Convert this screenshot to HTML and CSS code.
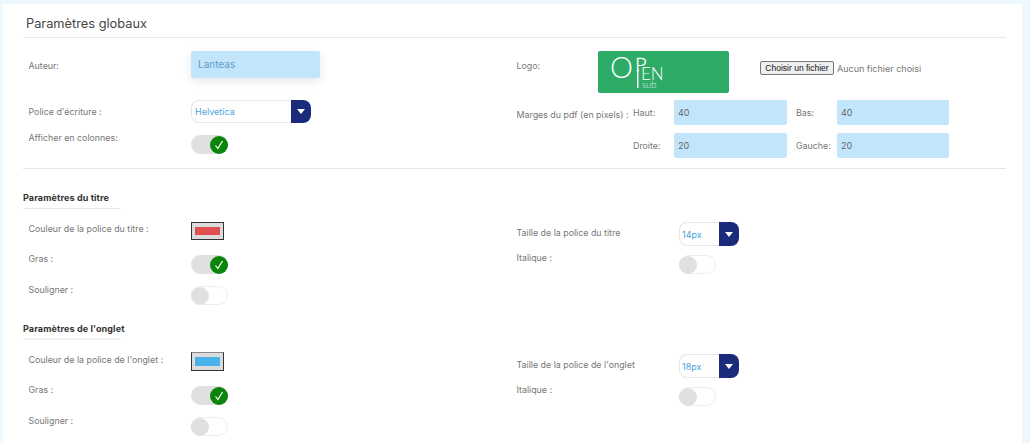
FILE: index.html
```html
<!DOCTYPE html>
<html lang="fr">
<head>
<meta charset="utf-8">
<title>Paramètres</title>
<link rel="stylesheet" href="styles.css">
</head>
<body>
<main class="card">
  <h1 class="title">Paramètres globaux</h1>

  <section class="grid global">
    <div class="col">
      <div class="row row-author">
        <span class="label">Auteur:</span>
        <div class="author">Lanteas</div>
      </div>
      <div class="row row-font">
        <span class="label">Police d'écriture :</span>
        <div class="select wide"><span class="value">Helvetica</span><span class="caret"><i></i></span></div>
      </div>
      <div class="row row-toggle">
        <span class="label">Afficher en colonnes:</span>
        <div class="toggle on"><span class="knob"><svg viewBox="0 0 18 18" width="18" height="18"><path d="M5.5 9.5l2.4 3L12.5 5" fill="none" stroke="#fff" stroke-width="1.2"/></svg></span></div>
      </div>
    </div>
    <div class="col">
      <div class="logo-row">
        <span class="label logo-label">Logo:</span>
        <div class="logo">
          <svg viewBox="0 0 131 42" width="131" height="42">
            <text x="12" y="27" class="l-o">O</text>
            <text x="37" y="21" class="l-p">P</text>
            <rect x="39" y="18" width="1.5" height="19" fill="#fff"/>
            <text x="43" y="29" class="l-en">EN</text>
            <text x="44" y="37" class="l-sub">sub</text>
          </svg>
        </div>
        <div class="file">
          <button class="file-btn" type="button">Choisir un fichier</button>
          <span class="file-name">Aucun fichier choisi</span>
        </div>
      </div>
      <div class="margins">
        <span class="label margins-label">Marges du pdf (en pixels) :</span>
        <div class="margins-grid">
          <span class="label">Haut:</span><div class="box">40</div>
          <span class="label second">Bas:</span><div class="box">40</div>
          <span class="label">Droite:</span><div class="box">20</div>
          <span class="label second">Gauche:</span><div class="box">20</div>
        </div>
      </div>
    </div>
  </section>

  <section class="block block-title">
    <h2 class="subtitle">Paramètres du titre</h2>
    <div class="grid">
      <div class="col">
        <div class="row row-color">
          <span class="label">Couleur de la police du titre :</span>
          <div class="swatch"><span class="fill red"></span></div>
        </div>
        <div class="row row-bold">
          <span class="label">Gras :</span>
          <div class="toggle on"><span class="knob"><svg viewBox="0 0 18 18" width="18" height="18"><path d="M5.5 9.5l2.4 3L12.5 5" fill="none" stroke="#fff" stroke-width="1.2"/></svg></span></div>
        </div>
        <div class="row row-under">
          <span class="label">Souligner :</span>
          <div class="toggle"><span class="knob"></span></div>
        </div>
      </div>
      <div class="col">
        <div class="row row-size">
          <span class="label">Taille de la police du titre</span>
          <div class="select small"><span class="value">14px</span><span class="caret"><i></i></span></div>
        </div>
        <div class="row row-italic">
          <span class="label">Italique :</span>
          <div class="toggle"><span class="knob"></span></div>
        </div>
      </div>
    </div>
  </section>

  <section class="block block-tab">
    <h2 class="subtitle thick">Paramètres de l'onglet</h2>
    <div class="grid">
      <div class="col">
        <div class="row row-color">
          <span class="label">Couleur de la police de l'onglet :</span>
          <div class="swatch"><span class="fill blue"></span></div>
        </div>
        <div class="row row-bold">
          <span class="label">Gras :</span>
          <div class="toggle on"><span class="knob"><svg viewBox="0 0 18 18" width="18" height="18"><path d="M5.5 9.5l2.4 3L12.5 5" fill="none" stroke="#fff" stroke-width="1.2"/></svg></span></div>
        </div>
        <div class="row row-under">
          <span class="label">Souligner :</span>
          <div class="toggle"><span class="knob"></span></div>
        </div>
      </div>
      <div class="col">
        <div class="row row-size">
          <span class="label">Taille de la police de l'onglet</span>
          <div class="select small"><span class="value">18px</span><span class="caret"><i></i></span></div>
        </div>
        <div class="row row-italic">
          <span class="label">Italique :</span>
          <div class="toggle"><span class="knob"></span></div>
        </div>
      </div>
    </div>
  </section>
</main>
</body>
</html>
```
FILE: styles.css
```css
* { box-sizing: border-box; }
html, body { height: 100%; }
body {
  margin: 0;
  background: #eef9ff;
  overflow: hidden;
  font-family: Inter, "Liberation Sans", sans-serif;
  color: #6f6f6f;
}
.card {
  margin: 4px 8px 0 3px;
  padding: 12px 16px 0 20px;
  height: 439px;
  background: #fff;
}
.title {
  margin: 0;
  height: 22px;
  padding-left: 3px;
  font-size: 12.8px;
  line-height: 15px;
  font-weight: 400;
  color: #444;
  border-bottom: 1px solid #e8e8e8;
}
.grid {
  display: grid;
  grid-template-columns: 488px 1fr;
  padding-left: 5.5px;
}
.global {
  height: 131px;
  padding-top: 13px;
  border-bottom: 1px solid #e6e6e6;
}
.row { display: flex; }
.label {
  font-size: 8.85px;
  line-height: 11px;
  color: #777;
  white-space: nowrap;
}
.row > .label { width: 162.5px; flex: none; }

.row-author { height: 49px; }
.row-author .label { padding-top: 9px; }
.author {
  width: 129px;
  height: 27px;
  padding-left: 7px;
  background: #c3e5fc;
  border-radius: 2px;
  box-shadow: 0 3px 10px rgba(0,0,0,.1);
  font-size: 10px;
  line-height: 27px;
  color: #5b9cc9;
}
.row-font { height: 35px; align-items: flex-start; }
.row-font .label { padding-top: 6px; }
.row-toggle { align-items: flex-start; }
.row-toggle .label { margin-top: -3px; }

.select { display: flex; height: 24px; }
.select.wide { width: 120px; height: 23px; }
.select.small { width: 60px; }
.value {
  flex: 1;
  padding-left: 3px;
  border: 1px solid #e6e6e6;
  border-right: 0;
  border-radius: 8px 0 0 8px;
  font-size: 9px;
  line-height: 21px;
  color: #4ba3dc;
}
.small .value { line-height: 23px; padding-left: 2px; }
.caret {
  width: 20px;
  display: flex;
  align-items: center;
  justify-content: center;
  background: #1b2a7b;
  border-radius: 0 8px 8px 0;
}
.caret i {
  width: 0;
  height: 0;
  border-left: 4px solid transparent;
  border-right: 4px solid transparent;
  border-top: 5px solid #fff;
}

.toggle {
  width: 37px;
  height: 19px;
  display: flex;
  border: 1px solid #eee;
  border-radius: 10px;
  background: #fff;
}
.knob {
  width: 18px;
  height: 18px;
  margin: 0 0 0 -1px;
  border-radius: 50%;
  background: #e0e0e0;
}
.toggle.on { background: #e0e0e0; border-color: #e0e0e0; justify-content: flex-end; }
.toggle.on .knob { background: #0a840a; margin: 0 -1px 0 0; }
.knob svg { display: block; }

.logo-row { display: flex; height: 49px; }
.logo-label { width: 81.5px; padding-top: 9px; }
.logo { width: 131px; height: 42px; background: #2eab67; border-radius: 2px; }
.logo svg { display: block; }
.logo text { fill: #fff; font-family: Lato, sans-serif; font-weight: 300; }
.l-o { font-size: 29px; }
.l-p { font-size: 20px; stroke: #fff; stroke-width: .3px; }
.l-en { font-size: 17px; }
.l-sub { font-size: 9.5px; opacity: .85; }
.file { display: flex; align-items: center; height: 14px; margin: 10px 0 0 31px; }
.file-btn {
  width: 74px;
  height: 14px;
  padding: 0;
  border: 1px solid #777;
  border-radius: 2px;
  background: #efefef;
  font-family: "Liberation Sans", sans-serif;
  font-size: 8.5px;
  line-height: 12px;
  color: #111;
}
.file-name { margin-left: 3px; font-size: 9px; color: #777; }

.margins { display: flex; }
.margins-label { width: 116.5px; padding-top: 9px; flex: none; }
.margins-grid {
  display: grid;
  grid-template-columns: 41px 113px 50px 112px;
  grid-auto-rows: 25px;
  row-gap: 8px;
}
.margins-grid .label { line-height: 25px; }
.margins-grid .second { padding-left: 9px; }
.box {
  background: #c3e5fc;
  border-radius: 2px;
  padding-left: 4px;
  font-size: 9px;
  line-height: 26px;
  color: #666;
}

.subtitle {
  margin: 0;
  width: 98px;
  height: 17px;
  font-size: 9px;
  line-height: 11px;
  font-weight: 700;
  letter-spacing: .12px;
  color: #333;
  white-space: nowrap;
  border-bottom: 1px solid #e8e8e8;
}
.subtitle.thick { border-bottom: 2px solid #f0f0f0; }
.block-title { padding-top: 23px; }
.block-tab { padding-top: 17px; }
.row-color { height: 33px; margin-top: 13px; }
.row-color .label { padding-top: 1px; }
.block-tab .row-color { margin-top: 12px; height: 34px; }
.block-tab .row-color .label { padding-top: 2px; }
.swatch {
  width: 33px;
  height: 18px;
  padding: 4px 3px;
  border: 1px solid #333;
  background: #dcdcdc;
}
.block-tab .swatch { height: 19px; border-top-color: #888; }
.fill { display: block; width: 100%; height: 100%; }
.red { background: #e05050; }
.blue { background: #4ab2ea; }
.row-bold { height: 31px; }
.row-bold .label { margin-top: -2px; }
.row-under { height: 20px; }
.row-under .label { margin-top: -2px; }
.row-size { height: 33px; margin-top: 13px; }
.row-size .label { padding-top: 5px; }
.block-tab .row-size { margin-top: 14px; }
.row-italic .label { margin-top: -3px; }
```
